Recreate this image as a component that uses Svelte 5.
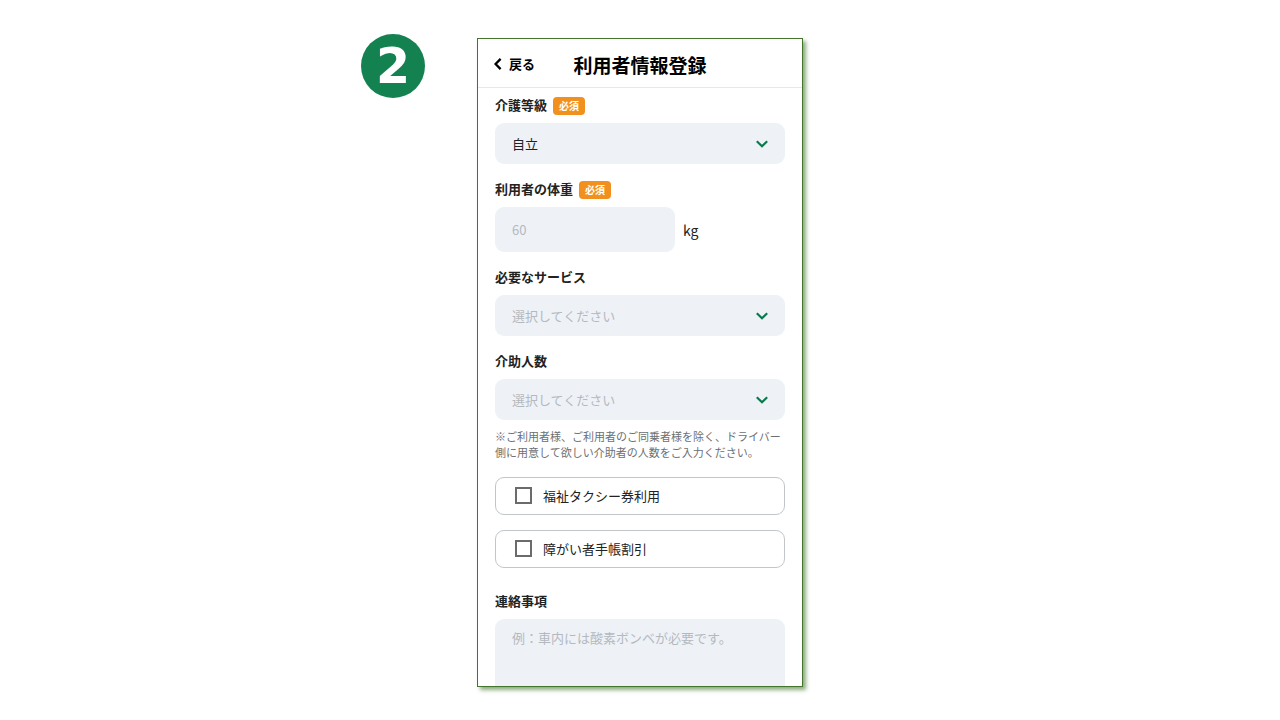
<script>
  let careLevel = $state('自立');
  let service = $state('');
  let helpers = $state('');
  let weight = $state('');
  let taxiTicket = $state(false);
  let disabilityDiscount = $state(false);
  let notes = $state('');
</script>

{#snippet chevron()}
  <svg class="chevron" viewBox="0 0 12 8" width="12" height="8" aria-hidden="true">
    <path d="M.8 1.2 6 6.2 11.2 1.2" fill="none" stroke="currentColor" stroke-width="2.2" />
  </svg>
{/snippet}

<main>
  <div class="step">2</div>

  <section class="screen">
    <header>
      <button class="back" type="button">
        <svg viewBox="0 0 8 12" width="8" height="12" aria-hidden="true">
          <path d="M6.6 .9 1.6 6 6.6 11.1" fill="none" stroke="currentColor" stroke-width="2.3" />
        </svg>
        戻る
      </button>
      <h1>利用者情報登録</h1>
    </header>

    <form>
      <div class="field">
        <div class="caption">
          <label for="care">介護等級</label>
          <span class="required">必須</span>
        </div>
        <div class="picker">
          <select id="care" bind:value={careLevel}>
            <option value="自立">自立</option>
          </select>
          {@render chevron()}
        </div>
      </div>

      <div class="field">
        <div class="caption">
          <label for="weight">利用者の体重</label>
          <span class="required">必須</span>
        </div>
        <div class="measure">
          <input id="weight" type="text" inputmode="numeric" placeholder="60" bind:value={weight} />
          <span>kg</span>
        </div>
      </div>

      <div class="field">
        <div class="caption"><label for="service">必要なサービス</label></div>
        <div class="picker">
          <select id="service" class:empty={service === ''} bind:value={service}>
            <option value="">選択してください</option>
          </select>
          {@render chevron()}
        </div>
      </div>

      <div class="field">
        <div class="caption"><label for="helpers">介助人数</label></div>
        <div class="picker">
          <select id="helpers" class:empty={helpers === ''} bind:value={helpers}>
            <option value="">選択してください</option>
          </select>
          {@render chevron()}
        </div>
        <p>※ご利用者様、ご利用者のご同乗者様を除く、ドライバー<br />側に用意して欲しい介助者の人数をご入力ください。</p>
      </div>

      <div class="checks">
        <label class="check">
          <input type="checkbox" bind:checked={taxiTicket} />
          福祉タクシー券利用
        </label>
        <label class="check">
          <input type="checkbox" bind:checked={disabilityDiscount} />
          障がい者手帳割引
        </label>
      </div>

      <div class="field">
        <div class="caption"><label for="notes">連絡事項</label></div>
        <textarea id="notes" rows="5" placeholder="例：車内には酸素ボンベが必要です。" bind:value={notes}></textarea>
      </div>
    </form>
  </section>
</main>

<style>
  :global(body) {
    margin: 0;
    background: #fff;
  }

  main,
  main * {
    box-sizing: border-box;
  }

  main {
    display: grid;
    grid-template-columns: 1fr minmax(0, 326px) 1fr;
    grid-template-rows: minmax(0, 1fr);
    height: 100vh;
    padding: 34px 0 33px;
    font-family: 'Noto Sans CJK JP', 'Noto Sans', sans-serif;
    font-size: 13px;
    color: #222;
  }

  button,
  select,
  input,
  textarea {
    font: inherit;
    color: inherit;
  }

  .step {
    display: grid;
    place-items: center;
    justify-self: end;
    width: 64px;
    height: 64px;
    margin-right: 52px;
    border-radius: 50%;
    background: #138250;
    color: #fff;
    font: bold 49px/66px 'DejaVu Sans', sans-serif;
  }

  .screen {
    margin-top: 4px;
    overflow: hidden;
    border: 1px solid #43752c;
    background: #fff;
    box-shadow: 3px 3px 4px rgba(67, 117, 44, 0.6);
  }

  header {
    display: grid;
    grid-template-columns: 1fr auto 1fr;
    align-items: center;
    height: 49px;
    padding: 4px 16px 0;
    border-bottom: 1px solid #e6e9ea;
  }

  .back {
    display: flex;
    align-items: center;
    gap: 7px;
    padding: 0 0 2px;
    border: 0;
    background: none;
    color: #000;
    font-weight: 700;
    line-height: 20px;
  }

  h1 {
    margin: 0;
    color: #000;
    font-size: 19px;
    font-weight: 700;
    line-height: 28px;
  }

  form {
    display: flex;
    flex-direction: column;
    gap: 17px;
    padding: 9px 17px 17px;
  }

  .field {
    display: flex;
    flex-direction: column;
    gap: 8px;
  }

  .caption {
    display: flex;
    gap: 6px;
    height: 18px;
    font-weight: 700;
    line-height: 18px;
  }

  .caption label {
    line-height: 16px;
  }

  .required {
    padding: 0 6px;
    border-radius: 4px;
    background: #f2901f;
    color: #fff;
    font-size: 10px;
  }

  .picker {
    display: grid;
    align-items: center;
  }

  .picker > :global(*) {
    grid-area: 1 / 1;
  }

  select,
  .measure input,
  textarea {
    width: 100%;
    border: 0;
    border-radius: 9px;
    background: #eef2f7;
    padding: 0 17px;
  }

  select {
    height: 41px;
    padding-bottom: 1px;
    appearance: none;
  }

  .empty,
  input::placeholder,
  textarea::placeholder {
    color: #b4b9bf;
    opacity: 1;
  }

  .chevron {
    justify-self: end;
    margin-right: 17px;
    color: #087a4b;
    pointer-events: none;
  }

  .measure {
    display: grid;
    grid-template-columns: 180px 1fr;
    align-items: center;
    gap: 8px;
    font-size: 14px;
  }

  .measure input {
    height: 45px;
    font-size: 13px;
  }

  p {
    margin: 0;
    color: #6c6f73;
    font-size: 11px;
    line-height: 16px;
    white-space: nowrap;
  }

  .checks {
    display: flex;
    flex-direction: column;
    gap: 15px;
    margin-bottom: 8px;
  }

  .check {
    display: flex;
    align-items: center;
    gap: 11px;
    height: 38px;
    padding: 0 19px 2px;
    border: 1px solid #c3c6c8;
    border-radius: 9px;
  }

  .check input {
    width: 17px;
    height: 17px;
    margin: 0;
    border: 2px solid #6b6b6b;
    background: #fff;
    appearance: none;
  }

  .check input:checked {
    background: #087a4b;
  }

  textarea {
    display: block;
    padding: 9px 17px;
    line-height: 20px;
    resize: none;
  }
</style>
